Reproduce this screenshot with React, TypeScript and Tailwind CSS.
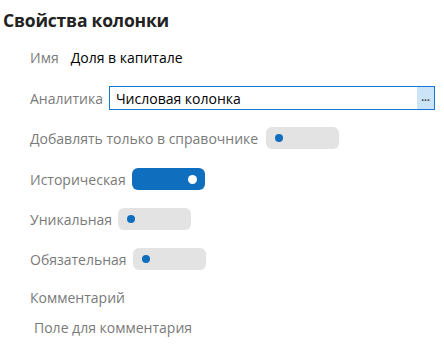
import React from "react";

function Toggle({ on }: { on?: boolean }) {
  return on ? (
    <div className="w-[73px] h-[22px] rounded-[6px] bg-[#106ebe] flex items-center justify-end pr-[8px]">
      <div className="w-[9px] h-[9px] rounded-full bg-white" />
    </div>
  ) : (
    <div className="w-[73px] h-[22px] rounded-[6px] bg-[#e3e3e3] flex items-center pl-[9px]">
      <div className="w-[8px] h-[8px] rounded-full bg-[#106ebe]" />
    </div>
  );
}

export default function App() {
  return (
    <div
      className="w-[444px] h-[344px] bg-white text-[14px] text-[#7a7a7a] overflow-hidden"
      style={{ fontFamily: '"Open Sans", "Noto Sans", sans-serif' }}
    >
      <div className="pl-[3px] pt-[7px] text-[17.5px] font-bold text-[#222222] leading-[26px] tracking-[-0.2px]">
        Свойства колонки
      </div>
      <div className="pl-[30px] flex flex-col">
        <div className="h-[22px] mt-[13px] flex items-center gap-[6px]">
          <span>Имя</span>
          <span className="text-black pl-[6px]">Доля в капитале</span>
        </div>
        <div className="h-[24px] mt-[18px] flex items-center gap-[6px]">
          <span>Аналитика</span>
          <div className="flex-1 mr-[9px] h-[24px] border border-[#1478d4] flex items-stretch">
            <div className="flex-1 flex items-center pl-[6px] text-black">Числовая колонка</div>
            <div className="w-[17px] bg-[#cce4f7] flex items-center justify-center text-[#333] text-[10px] font-bold leading-none pb-[2px]">
              ...
            </div>
          </div>
        </div>
        <div className="h-[22px] mt-[17px] flex items-center gap-[8px]">
          <span>Добавлять только в справочнике</span>
          <Toggle />
        </div>
        <div className="h-[22px] mt-[19px] flex items-center gap-[6px]">
          <span>Историческая</span>
          <Toggle on />
        </div>
        <div className="h-[22px] mt-[18px] flex items-center gap-[6px]">
          <span>Уникальная</span>
          <Toggle />
        </div>
        <div className="h-[22px] mt-[18px] flex items-center gap-[6px]">
          <span>Обязательная</span>
          <Toggle />
        </div>
        <div className="h-[22px] mt-[16px] flex items-center">
          <span>Комментарий</span>
        </div>
        <div className="h-[22px] mt-[8px] flex items-center pl-[4px]">
          <span>Поле для комментария</span>
        </div>
      </div>
    </div>
  );
}
